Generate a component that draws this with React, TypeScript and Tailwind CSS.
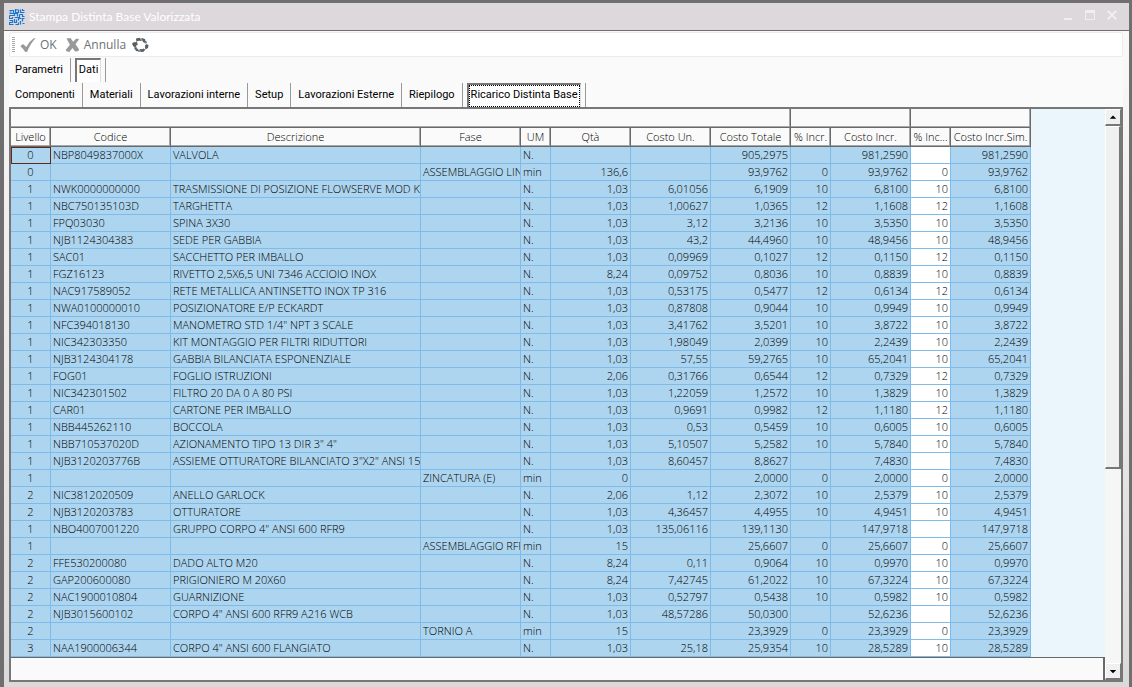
import {useState} from "react";

// livello, codice, descrizione, fase, UM, quantità, costo unitario, costo totale, % incr., costo incr.
const DISTINTA: string[][] = [
    ["0", "NBP8049837000X", "VALVOLA", "", "N.", "", "", "905,2975", "", "981,2590"],
    ["0", "", "", "ASSEMBLAGGIO LINEA", "min", "136,6", "", "93,9762", "0", "93,9762"],
    ["1", "NWK0000000000", "TRASMISSIONE DI POSIZIONE FLOWSERVE MOD KM", "", "N.", "1,03", "6,01056", "6,1909", "10", "6,8100"],
    ["1", "NBC750135103D", "TARGHETTA", "", "N.", "1,03", "1,00627", "1,0365", "12", "1,1608"],
    ["1", "FPQ03030", "SPINA 3X30", "", "N.", "1,03", "3,12", "3,2136", "10", "3,5350"],
    ["1", "NJB1124304383", "SEDE PER GABBIA", "", "N.", "1,03", "43,2", "44,4960", "10", "48,9456"],
    ["1", "SAC01", "SACCHETTO PER IMBALLO", "", "N.", "1,03", "0,09969", "0,1027", "12", "0,1150"],
    ["1", "FGZ16123", "RIVETTO 2,5X6,5 UNI 7346 ACCIOIO INOX", "", "N.", "8,24", "0,09752", "0,8036", "10", "0,8839"],
    ["1", "NAC917589052", "RETE METALLICA ANTINSETTO INOX TP 316", "", "N.", "1,03", "0,53175", "0,5477", "12", "0,6134"],
    ["1", "NWA0100000010", "POSIZIONATORE E/P ECKARDT", "", "N.", "1,03", "0,87808", "0,9044", "10", "0,9949"],
    ["1", "NFC394018130", "MANOMETRO STD 1/4\" NPT 3 SCALE", "", "N.", "1,03", "3,41762", "3,5201", "10", "3,8722"],
    ["1", "NIC342303350", "KIT MONTAGGIO PER FILTRI RIDUTTORI", "", "N.", "1,03", "1,98049", "2,0399", "10", "2,2439"],
    ["1", "NJB3124304178", "GABBIA BILANCIATA ESPONENZIALE", "", "N.", "1,03", "57,55", "59,2765", "10", "65,2041"],
    ["1", "FOG01", "FOGLIO ISTRUZIONI", "", "N.", "2,06", "0,31766", "0,6544", "12", "0,7329"],
    ["1", "NIC342301502", "FILTRO 20 DA 0 A 80 PSI", "", "N.", "1,03", "1,22059", "1,2572", "10", "1,3829"],
    ["1", "CAR01", "CARTONE PER IMBALLO", "", "N.", "1,03", "0,9691", "0,9982", "12", "1,1180"],
    ["1", "NBB445262110", "BOCCOLA", "", "N.", "1,03", "0,53", "0,5459", "10", "0,6005"],
    ["1", "NBB710537020D", "AZIONAMENTO TIPO 13 DIR 3\" 4\"", "", "N.", "1,03", "5,10507", "5,2582", "10", "5,7840"],
    ["1", "NJB3120203776B", "ASSIEME OTTURATORE BILANCIATO 3\"X2\" ANSI 150", "", "N.", "1,03", "8,60457", "8,8627", "", "7,4830"],
    ["1", "", "", "ZINCATURA (E)", "min", "0", "", "2,0000", "0", "2,0000"],
    ["2", "NIC3812020509", "ANELLO GARLOCK", "", "N.", "2,06", "1,12", "2,3072", "10", "2,5379"],
    ["2", "NJB3120203783", "OTTURATORE", "", "N.", "1,03", "4,36457", "4,4955", "10", "4,9451"],
    ["1", "NBO4007001220", "GRUPPO CORPO 4\" ANSI 600 RFR9", "", "N.", "1,03", "135,06116", "139,1130", "", "147,9718"],
    ["1", "", "", "ASSEMBLAGGIO RFR9", "min", "15", "", "25,6607", "0", "25,6607"],
    ["2", "FFE530200080", "DADO ALTO M20", "", "N.", "8,24", "0,11", "0,9064", "10", "0,9970"],
    ["2", "GAP200600080", "PRIGIONIERO M 20X60", "", "N.", "8,24", "7,42745", "61,2022", "10", "67,3224"],
    ["2", "NAC1900010804", "GUARNIZIONE", "", "N.", "1,03", "0,52797", "0,5438", "10", "0,5982"],
    ["2", "NJB3015600102", "CORPO 4\" ANSI 600 RFR9 A216 WCB", "", "N.", "1,03", "48,57286", "50,0300", "", "52,6236"],
    ["2", "", "", "TORNIO A", "min", "15", "", "23,3929", "0", "23,3929"],
    ["3", "NAA1900006344", "CORPO 4\" ANSI 600 FLANGIATO", "", "N.", "1,03", "25,18", "25,9354", "10", "28,5289"],
];

const COLONNE = ["Livello", "Codice", "Descrizione", "Fase", "UM", "Qtà", "Costo Un.", "Costo Totale", "% Incr.", "Costo Incr.", "% Inc...", "Costo Incr.Sim."];

const SCHEDE = ["Componenti", "Materiali", "Lavorazioni interne", "Setup", "Lavorazioni Esterne", "Riepilogo", "Ricarico Distinta Base"];

export default function App() {
    const [pagina, setPagina] = useState("Dati");
    const [scheda, setScheda] = useState("Ricarico Distinta Base");

    return (
        <div className="border-[3px] border-l-4 border-b-0 border-[#6f6f6f] bg-linear-to-b from-[#fafafa] to-[#dadada] font-['Open_Sans','Noto_Sans',sans-serif] text-black">
            {/* Barra del titolo */}
            <header className="flex h-7 items-center justify-between border-b border-[#6f6f6f] bg-[#dcd8dc] pl-[5px] pr-3">
                <div className="flex items-center gap-1">
                    <Logo/>
                    <h1 className="font-[Lato,sans-serif] text-[12px] leading-4 text-white">Stampa Distinta Base Valorizzata</h1>
                </div>
                <div className="flex items-center gap-3 pb-1 text-[#f0eef0]">
                    <button aria-label="Riduci a icona">
                        <svg className="block h-3 w-2.5" viewBox="0 0 10 12" fill="currentColor">
                            <path d="M1 9h8v2H1z"/>
                        </svg>
                    </button>
                    <button aria-label="Ingrandisci">
                        <svg className="block h-3 w-2.5" viewBox="0 0 10 12" fill="currentColor">
                            <path fillRule="evenodd" d="M0 1h10v10H0zM1 4v6h8V4z"/>
                        </svg>
                    </button>
                    <button aria-label="Chiudi">
                        <svg className="block h-3 w-2.5" viewBox="0 0 10 12" fill="none" stroke="currentColor" strokeWidth="2">
                            <path d="M.7 1.7l8.6 8.6M9.3 1.7L.7 10.3"/>
                        </svg>
                    </button>
                </div>
            </header>

            <main className="pl-[5px] pr-1.5 pt-px pb-1.5">
                {/* Barra strumenti */}
                <div className="flex h-[25px] items-center rounded-xs border border-[#ececec] bg-white pl-0.5 text-[12px] leading-4 text-[#6b7277]">
                    <svg className="h-4 w-[3px]" viewBox="0 0 3 16" stroke="#a9a9a9" strokeDasharray="1 1">
                        <path d="M1.5 0v16" strokeWidth="3"/>
                    </svg>
                    <button className="ml-[5px] flex items-center gap-1">
                        <svg className="h-4 w-4" viewBox="0 0 16 16" fill="#999">
                            <path d="M.4 9.2L3 6.9l3.3 3.2Q9 4.5 13.5 1.5L15.8 1Q10 7 7.2 14.8L5.2 15Q3.2 11.5.4 9.2z"/>
                        </svg>
                        OK
                    </button>
                    <button className="ml-2 flex items-center gap-1">
                        <svg className="h-4 w-[15px]" viewBox="0 0 15 16" fill="#999">
                            <path d="M1.5 1.5l4-.5 2.6 3.7L11 1.7l3.2.3-3.7 5.2 3.7 5.3-1.2 1.8-3 .2-2.5-3.6-3.2 4-2.8-.6-.8-1.3 4.2-5.3z"/>
                        </svg>
                        Annulla
                    </button>
                    <button aria-label="Aggiorna" className="ml-1.5">
                        <svg className="block h-4 w-[17px]" viewBox="0 0 17 16">
                            <circle cx="8.5" cy="8" r="5.8" fill="none" stroke="#6f8fc0" strokeWidth="2.5" strokeDasharray="2 2.55"/>
                            <g fill="#5b5f58">
                                <path d="M4 1.5l4-.7L9.5 4 6 3.5 4.5 5z"/>
                                <path d="M10 1.2l3 .8.8 3.5-2.8-.2z"/>
                                <path d="M1 5.5l4-.5.8 3-1.8.5.2 2L1.500 9.500 0 7z"/>
                                <path d="M14 7l2.500 1-.5 3-2.500 1.500-.5-2z"/>
                                <path d="M2.500 11l3 .5 1.500 3-3-.5z"/>
                                <path d="M8 12l5 .2-1.500 2.500-3 .3z"/>
                            </g>
                        </svg>
                    </button>
                </div>

                {/* Schede */}
                <nav className="bg-[#fafafa] pl-[3px] font-[Roboto,sans-serif] text-[11px] leading-4">
                    <div className="flex h-[25px] items-center">
                        {["Parametri", "Dati"].map((nome) => (
                            <Scheda key={nome} nome={nome} attiva={nome === pagina} onClick={() => setPagina(nome)}/>
                        ))}
                    </div>
                    <div className="flex h-[25px] items-center">
                        {SCHEDE.map((nome) => (
                            <Scheda key={nome} nome={nome} attiva={nome === scheda} fuoco onClick={() => setScheda(nome)}/>
                        ))}
                    </div>
                </nav>

                {/* Griglia */}
                <section className="flex border-2 border-[#777] bg-[#eaf5fc]">
                    <div className="min-w-0 flex-1">
                        <div className="overflow-hidden">
                            <table className="w-[1020px] table-fixed border-separate border-spacing-0 text-[11px] leading-4 font-[350]">
                                <colgroup>
                                    <col className="w-10"/>
                                    <col className="w-[120px]"/>
                                    <col className="w-[250px]"/>
                                    <col className="w-[100px]"/>
                                    <col className="w-[30px]"/>
                                    <col className="w-20"/>
                                    <col className="w-20"/>
                                    <col className="w-20"/>
                                    <col className="w-10"/>
                                    <col className="w-20"/>
                                    <col className="w-10"/>
                                    <col className="w-20"/>
                                </colgroup>
                                <thead className="bg-[#fafafa]">
                                    <tr className="h-[19px]">
                                        <td colSpan={8} className="border-r border-b border-[#696969] shadow-[inset_-1px_-1px_#a8a8a8]"/>
                                        <td colSpan={2} className="border-r border-b border-[#696969] shadow-[inset_-1px_-1px_#a8a8a8]"/>
                                        <td colSpan={2} className="border-r border-b border-[#696969] shadow-[inset_-1px_-1px_#a8a8a8]"/>
                                    </tr>
                                    <tr className="h-[19px]">
                                        {COLONNE.map((c) => (
                                            <th
                                                key={c}
                                                scope="col"
                                                className="whitespace-nowrap border-r border-b border-[#696969] p-0 font-[350] shadow-[inset_-1px_-1px_#a8a8a8]"
                                            >
                                                {c}
                                            </th>
                                        ))}
                                    </tr>
                                </thead>
                                <tbody>
                                    {DISTINTA.map((r, i) => (
                                        <tr key={i} className="h-[17px] bg-[#add5ef]">
                                            {r.map((v, j) => (
                                                <td
                                                    key={j}
                                                    className={`overflow-hidden whitespace-nowrap border-r border-b border-[#7fbbe8] py-0 ${
                                                        j === 0 ? "px-0 text-center" : j < 5 ? "pl-0.5" : "pr-0.5 text-right"
                                                    } ${i === 0 && j === 0 ? "outline outline-[#5a2a1a] -outline-offset-1" : ""}`}
                                                >
                                                    {v}
                                                </td>
                                            ))}
                                            <td className="border-r border-b border-[#7fbbe8] bg-white p-0">
                                                <input
                                                    aria-label={`% incremento simulato, riga ${i + 1}`}
                                                    defaultValue={r[8]}
                                                    className="block h-4 w-full bg-white pr-0.5 text-right outline-none"
                                                />
                                            </td>
                                            <td className="border-r border-b border-[#7fbbe8] py-0 pr-0.5 text-right">{r[9]}</td>
                                        </tr>
                                    ))}
                                </tbody>
                            </table>
                        </div>
                        <div className="h-[23px] border-t border-r-2 border-[#696969] bg-[#fafafa]"/>
                    </div>

                    {/* Barra di scorrimento */}
                    <div className="flex w-4 flex-col bg-[#f6f6f6]">
                        <Freccia label="Scorri su" d="M4 6h7L7.5 2.5z"/>
                        <div className="h-[343px] border-r-2 border-b-2 border-[#777] border-t border-l border-t-white border-l-white bg-[#f0f0f0]"/>
                        <div className="flex-1"/>
                        <Freccia label="Scorri giù" d="M4 3h7L7.5 6.5z"/>
                    </div>
                </section>
            </main>
        </div>
    );
}

function Scheda({nome, attiva, fuoco = false, onClick}: {
    nome: string;
    attiva: boolean;
    fuoco?: boolean;
    onClick: () => void;
}) {
    return (
        <div className="flex h-6 items-center border-r border-[#999] pr-1 pl-1 first:pl-0">
            <button
                onClick={onClick}
                className={`h-6 whitespace-nowrap ${
                    attiva ? "border-t-2 border-l-2 border-r border-[#777] border-r-[#ddd] bg-white" : "px-[3px]"
                }`}
            >
                {attiva ? (
                    <span className={`block ${fuoco ? "border border-dotted border-black px-px pt-px pb-[3px]" : "px-0.5 pt-0.5 pb-1"}`}>{nome}</span>
                ) : nome}
            </button>
        </div>
    );
}

function Freccia({label, d}: { label: string; d: string }) {
    return (
        <button
            aria-label={label}
            className="flex h-[17px] w-full items-center justify-center border border-white border-r-[#777] border-b-2 border-b-[#777] bg-[#f0f0f0]"
        >
            <svg className="h-2 w-[15px]" viewBox="0 0 15 8">
                <path d={d}/>
            </svg>
        </button>
    );
}

function Logo() {
    return (
        <svg className="h-4 w-4" viewBox="0 0 16 16" fill="none" stroke="#1676d2" strokeWidth="1.2">
            <path d="M.5 1.500h4v3h-4M2.500 3h-2M6.500 0v3.500h3v-3M8 1.500V0M11.500.5v3h4M13.500 0v1.500h2M.5 6.500h5v-2h3v3M10.500 5.500h3v2h2M.5 6.500v3h3v-1.500M5.500 8.500h5v-3M12.500 9.500h-3v2M15.500 9.500h-2v3M.5 11.500h3v2h-3v2h4M5.500 10v3.500h2v-3M6.500 15.500h3v-2M11.500 12v3.500M13.500 14.500h2"/>
        </svg>
    );
}
